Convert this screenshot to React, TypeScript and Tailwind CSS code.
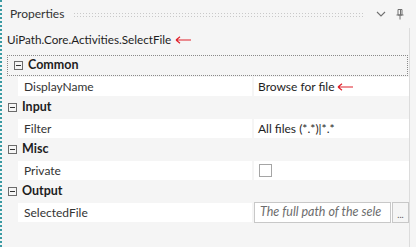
import React from "react";

function RedArrow() {
    return (
        <svg width="16" height="8" viewBox="0 0 16 8" className="shrink-0">
            <path d="M1 4H16M1 4L5 0.8M1 4L5 7.2" stroke="#e0202a" strokeWidth="1.2" fill="none" />
        </svg>
    );
}

function Expander() {
    return (
        <div className="w-[9px] h-[9px] border border-[#6b6b6b] flex items-center justify-center shrink-0">
            <div className="w-[5px] h-px bg-[#333]" />
        </div>
    );
}

function Category({ label, focused }: { label: string; focused?: boolean }) {
    return (
        <div
            className={`h-[21px] flex items-center gap-[5px] pl-[6px] ${focused ? "border border-dotted border-[#8a8a8a] ml-[5px] pl-[1px] mr-px" : ""}`}
        >
            <Expander />
            <span className="font-bold text-[12.5px] text-[#1e1e1e]">{label}</span>
        </div>
    );
}

function Prop({ name, children }: { name: string; children: React.ReactNode }) {
    return (
        <div className="h-[21px] flex pl-[16px] py-px gap-[2px]">
            <div className="w-[234px] bg-white flex items-center pl-[6px] text-[12px] text-[#333]">{name}</div>
            <div className="flex-1 bg-white flex items-center pl-[4px] text-[12px] text-[#1e1e1e]">{children}</div>
        </div>
    );
}

export default function App() {
    return (
        <div
            className="w-[416px] h-[247px] bg-[#f5f5f5] border-l-2 border-dotted border-[#3a9aa3] flex flex-col overflow-hidden"
            style={{ fontFamily: 'Lato, "Noto Sans", sans-serif' }}
        >
            {/* Header */}
            <div className="h-[28px] flex items-center pl-[8px] pr-[12px] shrink-0">
                <span className="text-[12px] text-[#333]">Properties</span>
                <div className="flex-1 h-[5px] ml-[9px] mr-[8px] bg-[radial-gradient(circle,#c9c9c9_0.8px,transparent_1px)] bg-[length:3px_3px]" />
                <svg width="10" height="6" viewBox="0 0 10 6" className="mx-[4px]">
                    <path d="M1 1L5 5L9 1" stroke="#707070" strokeWidth="1.1" fill="none" />
                </svg>
                <svg width="8" height="11" viewBox="0 0 8 11" className="ml-[6px]">
                    <path d="M2 0.5H6V6H2Z" stroke="#707070" strokeWidth="1" fill="none" />
                    <path d="M4.5 1V6" stroke="#707070" strokeWidth="1" />
                    <path d="M0.5 6H7.5M4 6V10.5" stroke="#707070" strokeWidth="1" />
                </svg>
            </div>

            {/* Body */}
            <div className="flex-1 w-[408px] border-r border-[#dcdcdc] flex flex-col">
                <div className="h-[27px] flex items-center gap-[4px] pl-[5px] pb-[3px] shrink-0">
                    <span className="text-[11.7px] text-[#1e1e1e]">UiPath.Core.Activities.SelectFile</span>
                    <RedArrow />
                </div>

                <Category label="Common" focused />
                <Prop name="DisplayName">
                    <span>Browse for file</span>
                    <span className="ml-[3px]">
                        <RedArrow />
                    </span>
                </Prop>
                <Category label="Input" />
                <Prop name="Filter">All files (*.*)|*.*</Prop>
                <Category label="Misc" />
                <Prop name="Private">
                    <div className="w-[13px] h-[13px] border border-[#a5a5a5] bg-white ml-px" />
                </Prop>
                <Category label="Output" />
                <div className="h-[21px] flex pl-[16px] py-px gap-[2px]">
                    <div className="w-[234px] bg-white flex items-center pl-[6px] text-[12px] text-[#333]">SelectedFile</div>
                    <div className="flex-1 bg-white flex items-center gap-px">
                        <div className="w-[137px] h-[21px] border border-[#c8c8c8] bg-white flex items-center pl-[5px] whitespace-nowrap">
                            <span className="italic text-[12.5px] text-[#6d6d6d]">The full path of the sele</span>
                        </div>
                        <div className="w-[17px] h-[21px] border border-[#c8c8c8] bg-[#f5f5f5] flex items-end justify-center pb-[3px] text-[9px] text-[#555] leading-none">
                            ...
                        </div>
                    </div>
                </div>
            </div>
        </div>
    );
}
